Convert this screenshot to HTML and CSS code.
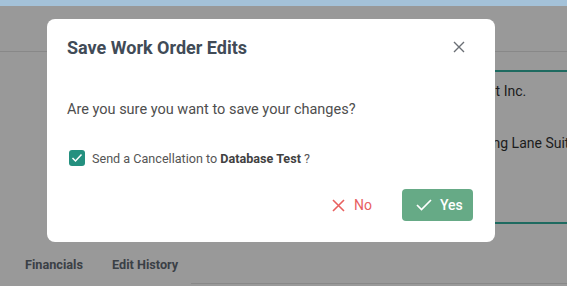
FILE: index.html
```html
<!DOCTYPE html>
<html lang="en">
<head>
<meta charset="UTF-8">
<meta name="viewport" content="width=device-width, initial-scale=1.0">
<title>Work Order</title>
<link rel="stylesheet" href="styles.css">
</head>
<body>

<div class="topbar"></div>
<div class="header"></div>

<div class="content">
  <div class="side"></div>
  <div class="details">
    <p class="line">Test Account Inc.</p>
    <p class="line">Unit 10, Spring Lane Suite 4</p>
  </div>
</div>

<div class="tabs">
  <span class="tab">Financials</span>
  <span class="tab">Edit History</span>
</div>
<div class="tab-rule"></div>

<div class="modal">
  <div class="modal-head">
    <h2>Save Work Order Edits</h2>
    <button class="close" aria-label="Close">
      <svg width="12" height="12" viewBox="0 0 12 12"><path d="M1 1 L11 11 M11 1 L1 11" stroke="#6b6f75" stroke-width="1.4" fill="none"/></svg>
    </button>
  </div>
  <p class="question">Are you sure you want to save your changes?</p>
  <label class="check">
    <span class="box">
      <svg width="12" height="10" viewBox="0 0 12 10"><path d="M1.5 5 L4.5 8 L10.5 1.5" stroke="#fff" stroke-width="1.5" fill="none"/></svg>
    </span>
    Send a Cancellation to&nbsp;<strong>Database Test</strong>&nbsp;?
  </label>
  <div class="modal-foot">
    <button class="btn-no">
      <svg width="13" height="13" viewBox="0 0 13 13"><path d="M1 1 L12 12 M12 1 L1 12" stroke="#e8605f" stroke-width="1.6" fill="none"/></svg>
      No
    </button>
    <button class="btn-yes">
      <svg width="16" height="12" viewBox="0 0 16 12"><path d="M1 6 L5.5 10.5 L15 1" stroke="#fff" stroke-width="1.7" fill="none"/></svg>
      Yes
    </button>
  </div>
</div>

</body>
</html>
```

FILE: styles.css
```css
body {
  margin: 0;
  background-color: #999;
  font-family: Roboto, "Liberation Sans", sans-serif;
  height: 286px;
  overflow: hidden;
}
.topbar {
  height: 6px;
  background-color: #a4c2d9;
}
.header {
  height: 45px;
  border-bottom: 1px solid #888;
}
.content {
  display: flex;
  height: 172px;
}
.side {
  width: 418px;
  flex-shrink: 0;
}
.details {
  flex: 1;
  min-width: 0;
  overflow: hidden;
  margin-top: 18px;
  border-top: 2px solid #1e6a60;
  border-bottom: 2px solid #1e6a60;
}
.line {
  margin: 10px 0 0 0;
  font-size: 14px;
  color: #1c1c1c;
  white-space: nowrap;
  line-height: 18px;
}
.line + .line {
  margin-top: 34px;
}
.tabs {
  display: flex;
  gap: 29px;
  padding: 33px 0 0 25px;
}
.tab {
  font-size: 12.7px;
  font-weight: 700;
  color: #3b4046;
}
.tab-rule {
  margin: 11px 0 0 191px;
  border-top: 1px solid #888;
}

/* dialog */
.modal {
  position: absolute;
  left: 47px;
  top: 19px;
  width: 448px;
  height: 223px;
  background-color: #fff;
  border-radius: 8px;
  box-sizing: border-box;
  padding: 0 22px 0 20px;
}
.modal-head {
  display: flex;
  align-items: center;
  justify-content: space-between;
  height: 56px;
}
.modal-head h2 {
  margin: 0;
  font-size: 18px;
  font-weight: 700;
  color: #414b57;
}
.close {
  border: none;
  background: none;
  padding: 0;
  margin-right: 8px;
  display: flex;
}
.question {
  margin: 26px 0 0 0;
  font-size: 14.5px;
  color: #4e4e4e;
}
.check {
  display: flex;
  align-items: center;
  margin: 32px 0 0 2px;
  font-size: 12.6px;
  color: #555;
}
.check strong {
  color: #414141;
}
.box {
  width: 16px;
  height: 16px;
  border-radius: 3px;
  background-color: #24907f;
  display: flex;
  align-items: center;
  justify-content: center;
  margin-right: 7px;
}
.modal-foot {
  display: flex;
  justify-content: flex-end;
  align-items: center;
  gap: 30px;
  margin-top: 23px;
}
.btn-no, .btn-yes {
  border: none;
  font-family: inherit;
  font-size: 14px;
  display: flex;
  align-items: center;
  gap: 9px;
  cursor: pointer;
}
.btn-no {
  background: none;
  color: #e8605f;
  padding: 0;
}
.btn-yes {
  background-color: #66aa86;
  color: #fff;
  font-weight: 500;
  height: 32px;
  width: 71px;
  border-radius: 4px;
  padding: 0 0 0 14px;
  gap: 8px;
}
```
